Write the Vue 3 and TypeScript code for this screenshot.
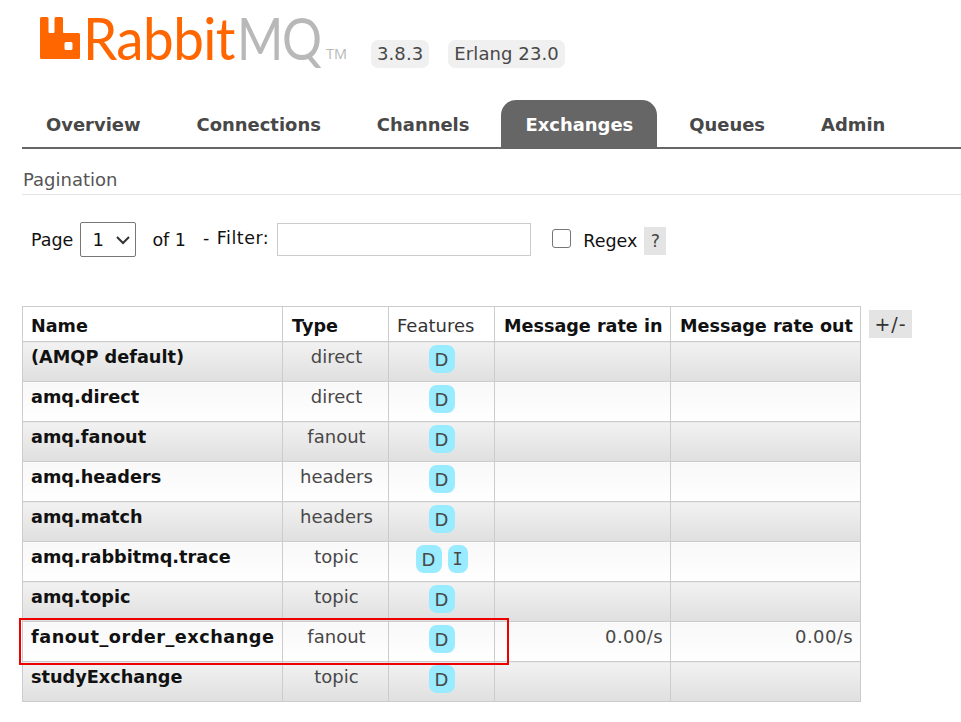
<script setup lang="ts">
interface Row {
  name: string
  type: string
  features: string[]
  rateIn?: string
  rateOut?: string
  wide?: boolean
}

const tabs = [
  { label: 'Overview', active: false },
  { label: 'Connections', active: false },
  { label: 'Channels', active: false },
  { label: 'Exchanges', active: true },
  { label: 'Queues', active: false },
  { label: 'Admin', active: false },
]

const rows: Row[] = [
  { name: '(AMQP default)', type: 'direct', features: ['D'] },
  { name: 'amq.direct', type: 'direct', features: ['D'] },
  { name: 'amq.fanout', type: 'fanout', features: ['D'] },
  { name: 'amq.headers', type: 'headers', features: ['D'] },
  { name: 'amq.match', type: 'headers', features: ['D'] },
  { name: 'amq.rabbitmq.trace', type: 'topic', features: ['D', 'I'] },
  { name: 'amq.topic', type: 'topic', features: ['D'] },
  { name: 'fanout_order_exchange', type: 'fanout', features: ['D'], rateIn: '0.00/s', rateOut: '0.00/s', wide: true },
  { name: 'studyExchange', type: 'topic', features: ['D'] },
]
</script>

<template>
  <div class="page">
    <header class="top">
      <div class="logo">
        <svg class="mark" width="40" height="42" viewBox="0 0 40 42">
          <path
            fill="#ff6600"
            fill-rule="evenodd"
            d="M1.500 0H7a1.500 1.500 0 0 1 1.500 1.500V15a1 1 0 0 0 1 1h4a1 1 0 0 0 1-1V1.500A1.500 1.500 0 0 1 16 0h5.500A1.500 1.500 0 0 1 23 1.500V15a1 1 0 0 0 1 1h14.500A1.500 1.500 0 0 1 40 17.500V40.500A1.500 1.500 0 0 1 38.500 42H1.500A1.500 1.500 0 0 1 0 40.500V1.500A1.500 1.500 0 0 1 1.500 0ZM26 25a1.500 1.500 0 0 0-1.500 1.500v5A1.500 1.500 0 0 0 26 33h5a1.500 1.500 0 0 0 1.500-1.500v-5A1.500 1.500 0 0 0 31 25Z"
          />
        </svg>
        <span class="word">Rabbit</span><span class="word mq">MQ</span><span class="tm">TM</span>
      </div>
      <span class="version first">3.8.3</span>
      <span class="version">Erlang 23.0</span>
    </header>

    <nav class="tabs">
      <a v-for="t in tabs" :key="t.label" class="tab" :class="{ active: t.active }">{{ t.label }}</a>
    </nav>

    <h3 class="section">Pagination</h3>

    <div class="controls">
      <span class="lbl">Page</span>
      <span class="select">1
        <svg width="16" height="10" viewBox="0 0 16 10"><path d="M2 2l6 6 6-6" fill="none" stroke="#333" stroke-width="2" /></svg>
      </span>
      <span class="of">of 1</span>
      <span class="filter">- Filter:</span>
      <span class="input"></span>
      <span class="check"></span>
      <span class="regex">Regex</span>
      <span class="help">?</span>
    </div>

    <div class="table-row">
      <div class="table-wrap">
        <table>
          <thead>
            <tr>
              <th class="c-name">Name</th>
              <th class="c-type">Type</th>
              <th class="c-feat plain">Features</th>
              <th class="c-in">Message rate in</th>
              <th class="c-out">Message rate out</th>
            </tr>
          </thead>
          <tbody>
            <tr v-for="(r, i) in rows" :key="r.name" :class="i % 2 === 0 ? 'odd' : 'even'">
              <td class="name" :class="{ wide: r.wide }">{{ r.name }}</td>
              <td class="center type">{{ r.type }}</td>
              <td class="center">
                <span class="badges">
                  <span v-for="f in r.features" :key="f" class="badge" :class="{ narrow: f === 'I' }">{{ f }}</span>
                </span>
              </td>
              <td class="rate">{{ r.rateIn }}</td>
              <td class="rate">{{ r.rateOut }}</td>
            </tr>
          </tbody>
        </table>
        <div class="highlight"></div>
      </div>
      <span class="plusminus">+/-</span>
    </div>
  </div>
</template>

<style>
html, body { margin: 0; background: #fff; }
</style>

<style scoped>
.page {
  width: 961px;
  height: 722px;
  overflow: hidden;
  font-family: "DejaVu Sans", Verdana, sans-serif;
  font-size: 17px;
  color: #484848;
  box-sizing: border-box;
  padding-top: 17px;
}
.top {
  display: flex;
  align-items: flex-start;
  height: 83px;
  padding-left: 40px;
}
.logo {
  display: flex;
  align-items: flex-start;
  width: 331px;
  height: 42px;
  flex: none;
}
.mark { flex: none; margin-right: 3px; }
.word {
  flex: none;
  width: 147px;
  font-family: "Lato", sans-serif;
  font-weight: 400;
  font-size: 58px;
  line-height: 41px;
  color: #ff6600;
  letter-spacing: -0.6px;
  white-space: nowrap;
  transform: scaleX(0.945);
  transform-origin: 0 0;
}
.word.mq {
  width: 81px;
  color: #b8b8b8;
  margin-left: 7px;
  letter-spacing: -1.5px;
  transform: scaleX(0.86);
}
.tm {
  font-family: "Open Sans", sans-serif;
  font-size: 14.500px;
  line-height: 14px;
  color: #b8b8b8;
  margin: 30px 0 0 8px;
}
.version {
  background: #f0f0f0;
  border-radius: 7px;
  height: 28px;
  line-height: 28px;
  padding: 0 6px;
  margin-top: 23px;
  font-size: 18px;
  letter-spacing: 0.1px;
  color: #484848;
}
.version.first { margin-right: 19px; }
.tabs {
  display: flex;
  margin-left: 22px;
  height: 47px;
  border-bottom: 2px solid #666;
}
.tab {
  font-weight: 700;
  font-size: 17.960px;
  line-height: 50px;
  padding: 0 24px;
  margin-right: 8px;
  color: #484848;
}
.tab.active {
  background: #666;
  color: #fff;
  border-radius: 15px 15px 0 0;
  height: 47px;
}
.section {
  margin: 0 0 0 22px;
  height: 45px;
  line-height: 62px;
  font-size: 18px;
  font-weight: 400;
  color: #555;
  border-bottom: 1px solid #e4e4e4;
  padding-left: 1px;
}
.controls {
  display: flex;
  align-items: center;
  height: 35px;
  margin-top: 27px;
  padding-left: 31px;
  color: #111;
  font-size: 17.5px;
}
.select {
  display: flex;
  align-items: center;
  justify-content: space-between;
  box-sizing: border-box;
  width: 56px;
  height: 35px;
  margin-left: 7px;
  padding: 0 4px 0 11px;
  border: 1px solid #777;
  border-radius: 2px;
  font-size: 18px;
}
.of { margin-left: 16px; }
.filter { margin-left: 17px; margin-top: -3px; letter-spacing: 0.5px; word-spacing: 1px; }
.input {
  box-sizing: border-box;
  width: 254px;
  height: 33px;
  margin-left: 8px;
  border: 1px solid #ccc;
}
.check {
  box-sizing: border-box;
  width: 19px;
  height: 19px;
  margin-left: 21px;
  margin-top: -3px;
  border: 1px solid #767676;
  border-radius: 3px;
}
.regex { margin-left: 12px; margin-top: 2px; }
.help {
  width: 22px;
  height: 28px;
  line-height: 28px;
  margin-left: 7px;
  margin-top: 3px;
  text-align: center;
  background: #e4e4e4;
  color: #484848;
}
.table-row {
  display: flex;
  align-items: flex-start;
  margin-top: 49px;
  margin-left: 22px;
}
.table-wrap { position: relative; }
table {
  border-collapse: collapse;
  table-layout: fixed;
  width: 839px;
}
th, td {
  border: 1px solid #ccc;
  padding: 0 8px;
  box-sizing: border-box;
}
th {
  height: 35px;
  text-align: left;
  color: #111;
  font-weight: 700;
  font-size: 17.6px;
  white-space: nowrap;
  background: #fff;
  line-height: 30px;
  padding-top: 4px;
  padding-left: 9px;
}
th.c-name { padding-left: 8px; }
th.plain { font-weight: 400; color: #333; font-size: 18px; padding-left: 8px; padding-right: 0; }
.c-name { width: 260px; }
.c-type { width: 106px; }
.c-feat { width: 106px; }
.c-in { width: 176px; }
.c-out { width: 190px; }
td {
  height: 40px;
  vertical-align: top;
  line-height: 30px;
  font-size: 18px;
  white-space: nowrap;
}
tr.odd td { background: linear-gradient(#f2f2f2, #dfdfdf); }
tr.even td { background: linear-gradient(#f8f8f8, #ffffff); }
td.name { font-weight: 700; font-size: 17.7px; color: #111; }
td.name.wide { letter-spacing: 0.5px; }
td.center { text-align: center; color: #484848; }
td.type { padding-left: 10px; }
td.rate { text-align: right; color: #484848; letter-spacing: 0.4px; padding-right: 7px; }
.badges {
  display: flex;
  justify-content: center;
  gap: 6px;
  margin-top: 3px;
}
.badge {
  box-sizing: border-box;
  width: 26px;
  height: 28px;
  line-height: 29px;
  border-radius: 8px;
  background: #99ebff;
  text-align: center;
  font-size: 18px;
  color: #484848;
}
.badge.narrow { width: 20px; font-family: "DejaVu Sans Mono", monospace; font-size: 17px; }
.highlight {
  position: absolute;
  left: -3px;
  top: 312px;
  width: 490px;
  height: 47px;
  box-sizing: border-box;
  border: 2px solid #ee0000;
  pointer-events: none;
}
.plusminus {
  flex: none;
  width: 43px;
  height: 28px;
  line-height: 29px;
  margin: 4px 0 0 8px;
  text-align: center;
  background: #e4e4e4;
  color: #333;
  font-size: 19px;
  letter-spacing: 1px;
}
</style>
